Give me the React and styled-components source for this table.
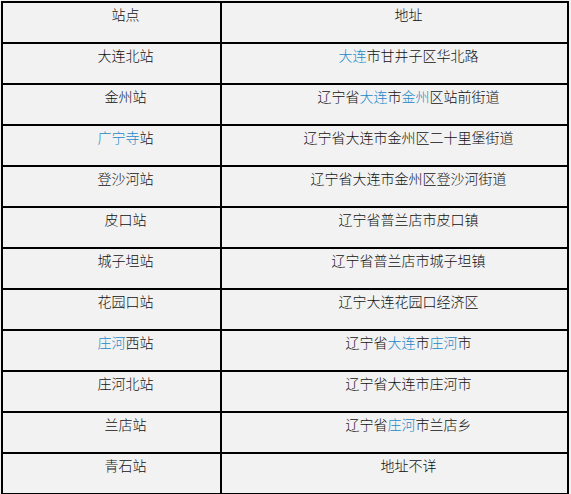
import React from "react";
import styled, { createGlobalStyle } from "styled-components";

const Global = createGlobalStyle`
  html, body {
    margin: 0;
    padding: 0;
    background: #f2f2f2;
  }
`;

const Page = styled.div`
  padding: 1px 0 0 1px;
`;

const Table = styled.div`
  display: grid;
  grid-template-columns: 219px 347px;
  grid-auto-rows: 41px;
  width: 566px;
  border-top: 2px solid #000;
  border-left: 2px solid #000;
  background: #f2f2f2;
  font-family: "Noto Sans CJK SC", "Noto Sans", sans-serif;
  font-size: 14px;
  font-weight: 300;
  line-height: 20px;
  color: #111;
`;

const Cell = styled.div`
  box-sizing: border-box;
  border-right: 2px solid #000;
  border-bottom: 2px solid #000;
  padding: 1px 0 0 28px;
  text-align: center;
  white-space: nowrap;
`;

const Link = styled.span`
  color: #2389c9;
`;

const rows = [
  ["大连北站", "[大连]市甘井子区华北路"],
  ["金州站", "辽宁省[大连]市[金州]区站前街道"],
  ["[广宁寺]站", "辽宁省大连市金州区二十里堡街道"],
  ["登沙河站", "辽宁省大连市金州区登沙河街道"],
  ["皮口站", "辽宁省普兰店市皮口镇"],
  ["城子坦站", "辽宁省普兰店市城子坦镇"],
  ["花园口站", "辽宁大连花园口经济区"],
  ["[庄河]西站", "辽宁省[大连]市[庄河]市"],
  ["庄河北站", "辽宁省大连市庄河市"],
  ["兰店站", "辽宁省[庄河]市兰店乡"],
  ["青石站", "地址不详"],
];

function Rich({ text }) {
  const parts = text.split(/(\[[^\]]+\])/).filter(Boolean);
  return parts.map((p, i) =>
    p.startsWith("[") ? <Link key={i}>{p.slice(1, -1)}</Link> : <React.Fragment key={i}>{p}</React.Fragment>
  );
}

export default function App() {
  return (
    <>
      <Global />
      <Page>
        <Table>
          <Cell>站点</Cell>
          <Cell>地址</Cell>
          {rows.map(([a, b], i) => (
            <React.Fragment key={i}>
              <Cell><Rich text={a} /></Cell>
              <Cell><Rich text={b} /></Cell>
            </React.Fragment>
          ))}
        </Table>
      </Page>
    </>
  );
}
